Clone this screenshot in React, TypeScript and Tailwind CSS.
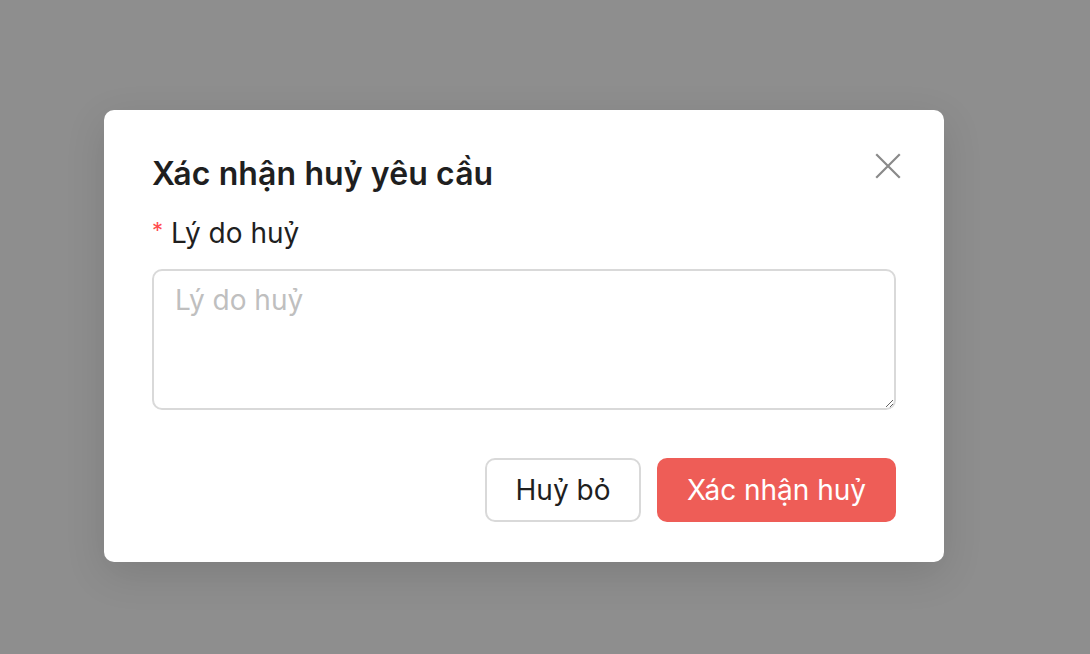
import { useState } from 'react'

function CloseIcon() {
  return (
    <svg viewBox="0 0 26 26" className="h-[26px] w-[26px]" fill="none" stroke="currentColor" strokeWidth="2.2" strokeLinecap="square">
      <path d="M2 2 L24 24 M24 2 L2 24" />
    </svg>
  )
}

export default function App() {
  const [reason, setReason] = useState('')

  return (
    <div
      className="flex min-h-screen w-full items-start bg-[#8e8e8e] pt-[110px] pl-[104px]"
      style={{ fontFamily: 'Inter, "Noto Sans", "Liberation Sans", sans-serif' }}
    >
      <div className="relative w-[840px] rounded-[10px] bg-white px-12 pt-10 pb-10 shadow-[0_12px_40px_rgba(0,0,0,0.12)]">
        <button className="absolute top-[43px] right-[43px] text-[#8a8a8a]">
          <CloseIcon />
        </button>

        <h2 className="text-[32px] leading-[48px] font-semibold tracking-[0.1px] text-[#1f1f1f]">Xác nhận huỷ yêu cầu</h2>

        <label className="mt-[14px] flex items-center text-[28px] leading-[42px] text-[#1f1f1f]">
          <span className="mr-[8px] -translate-y-[3px] text-[22px] text-[#ff4d4f]">*</span>
          Lý do huỷ
        </label>

        <textarea
          value={reason}
          onChange={e => setReason(e.target.value)}
          placeholder="Lý do huỷ"
          className="mt-[15px] block h-[141px] w-full rounded-[10px] border-2 border-[#d9d9d9] px-[21px] py-[7px] text-[28px] leading-[44px] text-[#1f1f1f] outline-none placeholder:text-[#bfbfbf]"
        />

        <div className="mt-12 flex justify-end gap-4">
          <button className="h-16 w-[156px] rounded-[10px] border-2 border-[#d9d9d9] bg-white text-[28px] text-[#1f1f1f]">
            Huỷ bỏ
          </button>
          <button className="h-16 w-[239px] rounded-[10px] bg-[#ee5d57] text-[28px] text-white">
            Xác nhận huỷ
          </button>
        </div>
      </div>
    </div>
  )
}
